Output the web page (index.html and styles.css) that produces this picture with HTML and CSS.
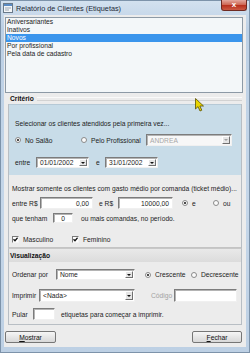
FILE: index.html
```html
<!DOCTYPE html>
<html lang="pt-BR">
<head>
    <meta charset="UTF-8">
    <meta name="viewport" content="width=device-width, initial-scale=1.0">
    <title>Relatório de Clientes (Etiquetas)</title>
    <link rel="stylesheet" href="styles.css">
</head>
<body>
    <div class="window">
        <div class="titlebar">
            <svg class="app-icon" width="10" height="10" viewBox="0 0 10 10">
                <rect x="0.5" y="0.5" width="9" height="9" fill="#f4f6f8" stroke="#6a7a8a"/>
                <rect x="1" y="1" width="8" height="2" fill="#5b8cc4"/>
                <rect x="2" y="4.5" width="6" height="1" fill="#9aa6b2"/>
                <rect x="2" y="6.5" width="4" height="1" fill="#9aa6b2"/>
            </svg>
            <span class="title">Relatório de Clientes (Etiquetas)</span>
            <div class="close">x</div>
        </div>

        <div class="client">
            <ul class="listbox">
                <li>Aniversariantes</li>
                <li>Inativos</li>
                <li class="selected">Novos</li>
                <li>Por profissional</li>
                <li>Pela data de cadastro</li>
            </ul>

            <div class="group">
                <div class="group-title"><span>Critério</span></div>
                <div class="group-body">
                    <div class="panel-blue">
                        <div class="row row-text">Selecionar os clientes atendidos pela primeira vez...</div>
                        <div class="row row-opts">
                            <span class="radio checked w-salao"><i></i>No Salão</span>
                            <span class="radio w-prof"><i></i>Pelo Profissional</span>
                            <div class="combo disabled w-andrea"><span class="value">ANDREA</span><span class="drop"></span></div>
                        </div>
                        <div class="row row-dates">
                            <span class="lbl w-entre">entre</span>
                            <div class="combo w-date"><span class="value">01/01/2002</span><span class="drop"></span></div>
                            <span class="lbl w-e">e</span>
                            <div class="combo w-date"><span class="value">31/01/2002</span><span class="drop"></span></div>
                        </div>
                    </div>

                    <div class="panel-gray">
                        <div class="row row-text">Mostrar somente os clientes com gasto médio por comanda (ticket médio)...</div>
                        <div class="row row-money">
                            <span class="lbl w-entre-rs">entre R$</span>
                            <div class="edit num w-min">0,00</div>
                            <span class="lbl w-ers">e R$</span>
                            <div class="edit num w-max">10000,00</div>
                            <span class="radio checked w-e-opt"><i></i>e</span>
                            <span class="radio"><i></i>ou</span>
                        </div>
                        <div class="row row-count">
                            <span class="lbl w-tenham">que tenham</span>
                            <div class="edit center w-count">0</div>
                            <span class="lbl after-count">ou mais comandas, no período.</span>
                        </div>
                        <div class="row row-checks">
                            <span class="check w-masc"><i><svg width="5" height="5" viewBox="0 0 5 5"><polyline points="0.5,2.3 2,3.8 4.6,0.8" fill="none" stroke="#111" stroke-width="1.3"/></svg></i>Masculino</span>
                            <span class="check"><i><svg width="5" height="5" viewBox="0 0 5 5"><polyline points="0.5,2.3 2,3.8 4.6,0.8" fill="none" stroke="#111" stroke-width="1.3"/></svg></i>Feminino</span>
                        </div>
                    </div>
                </div>
            </div>

            <div class="group">
                <div class="group-title view-title"><span>Visualização</span></div>
                <div class="group-body view-body">
                    <div class="row row-order">
                        <span class="lbl w-ordenar">Ordenar por</span>
                        <div class="combo w-nome"><span class="value">Nome</span><span class="drop"></span></div>
                        <span class="radio checked w-cresc"><i></i>Crescente</span>
                        <span class="radio"><i></i>Decrescente</span>
                    </div>
                    <div class="row row-print">
                        <span class="lbl w-imprimir">Imprimir</span>
                        <div class="combo w-nada"><span class="value">&lt;Nada&gt;</span><span class="drop"></span></div>
                        <span class="lbl muted w-codigo">Código</span>
                        <div class="edit w-codigo-box"></div>
                    </div>
                    <div class="row row-skip">
                        <span class="lbl w-pular">Pular</span>
                        <div class="edit w-skip"></div>
                        <span class="lbl after-skip">etiquetas para começar a imprimir.</span>
                    </div>
                </div>
            </div>

            <div class="buttons">
                <button class="btn btn-show"><u>M</u>ostrar</button>
                <button class="btn btn-close"><u>F</u>echar</button>
            </div>
        </div>

        <svg class="cursor" width="10" height="15" viewBox="0 0 10 15">
            <polygon points="0.5,0.5 0.5,11 3,8.6 5,13 6.8,12.2 4.9,8 8.5,8" fill="#e8d400" stroke="#5a5000" stroke-width="0.8"/>
        </svg>
    </div>
</body>
</html>
```

FILE: styles.css
```css
* {
    box-sizing: border-box;
}

body {
    margin: 0;
    font-family: "Liberation Sans", Arial, sans-serif;
    font-size: 6.7px;
    color: #1c1c1c;
}

.window {
    position: relative;
    width: 250px;
    height: 353px;
    border: 1px solid #7d93aa;
    background: linear-gradient(#d3e1ef, #bcd0e5 8%, #c4d6e9 60%, #bdd0e4);
    display: flex;
    flex-direction: column;
}

/* Barra de título */
.titlebar {
    height: 14px;
    display: flex;
    align-items: center;
    padding-left: 2px;
    position: relative;
}

.app-icon {
    margin-right: 3px;
}

.title {
    font-size: 7.3px;
    color: #1b2836;
}

.close {
    position: absolute;
    top: -1px;
    right: 2px;
    width: 26px;
    height: 11px;
    border: 1px solid #6e2a22;
    border-top: none;
    border-radius: 0 0 3px 3px;
    background: linear-gradient(#e3a89e, #cf6a58 45%, #b8321f 55%, #cc5a44);
    color: #fff;
    font-weight: bold;
    font-size: 8px;
    line-height: 9px;
    text-align: center;
}

/* Área cliente */
.client {
    flex: 1;
    margin: 0 3px 5px 3px;
    background: #ececec;
    display: flex;
    flex-direction: column;
}

.listbox {
    list-style: none;
    margin: 2px 3px 0 1px;
    padding: 0;
    height: 76px;
    border: 1px solid #8d9aa6;
    background: #f3f7f9;
}

.listbox li {
    height: 8px;
    line-height: 8px;
    padding-left: 1px;
}

.listbox li.selected {
    background: #3a95ec;
    color: #fff;
}

/* Grupos */
.group {
    margin: 0 4px;
}

.group-title {
    height: 11px;
    display: flex;
    align-items: center;
    padding-left: 2px;
    font-weight: bold;
    color: #111;
}

.group-title::after {
    content: "";
    flex: 1;
    margin-left: 3px;
    height: 2px;
    border-top: 1px solid #fafafa;
    border-bottom: 1px solid #d2d2d2;
}

.view-title {
    height: 14px;
    background: linear-gradient(#e9e9e9, #dcdcdc);
    border-top: 1px solid #c8c8c8;
    border-left: 1px solid #b8bec4;
    border-right: 1px solid #b8bec4;
    padding-left: 1px;
}

.view-title::after {
    display: none;
}

.group-body {
    border-left: 1px solid #b8bec4;
    border-right: 1px solid #b8bec4;
}

.panel-blue {
    height: 71px;
    background: #c8dce8;
    border-top: 1px solid #b6c9d6;
    padding: 13px 0 0 6px;
}

.panel-gray {
    height: 73px;
    padding: 8px 0 0 3px;
    border-bottom: 1px solid #c4c4c4;
}

.view-body {
    height: 63px;
    padding: 7px 0 0 3px;
    border-bottom: 1px solid #b8bec4;
}

.row {
    display: flex;
    align-items: center;
    white-space: nowrap;
}

.row-text {
    height: 10px;
}

.row-opts {
    height: 12px;
    margin-top: 6px;
}

.row-dates {
    height: 11px;
    margin-top: 11px;
}

.row-money {
    height: 12px;
    margin-top: 4px;
}

.row-count {
    height: 10px;
    margin-top: 4px;
}

.row-checks {
    height: 10px;
    margin-top: 11px;
}

.row-order {
    height: 11px;
}

.row-print {
    height: 13px;
    margin-top: 9px;
}

.row-skip {
    height: 12px;
    margin-top: 6px;
}

.lbl {
    display: inline-block;
}

.muted {
    color: #a2a2a2;
}

/* Larguras dos rótulos e campos */
.w-salao { width: 66px; }
.w-prof { width: 65px; }
.w-andrea { width: 86px; }
.w-entre { width: 21px; }
.w-date { width: 53px; }
.w-e { width: 16px; padding-left: 7px; }
.w-entre-rs { width: 28px; }
.w-min { width: 53px; }
.w-ers { width: 25px; padding-left: 6px; }
.w-max { width: 55px; }
.w-e-opt { width: 31px; margin-left: 9px; }
.w-tenham { width: 41px; }
.w-count { width: 20px; }
.after-count { margin-left: 8px; }
.w-masc { width: 60px; }
.w-ordenar { width: 44px; }
.w-nome { width: 79px; }
.w-cresc { width: 46px; margin-left: 10px; }
.w-imprimir { width: 27px; }
.w-nada { width: 96px; height: 11px; }
.w-codigo { width: 23px; margin-left: 16px; }
.w-codigo-box { width: 63px; }
.w-pular { width: 21px; }
.w-skip { width: 22px; }
.after-skip { margin-left: 6px; }

/* Controles */
.radio, .check {
    display: inline-flex;
    align-items: center;
}

.radio i {
    display: inline-block;
    width: 6px;
    height: 6px;
    margin-right: 4px;
    border-radius: 50%;
    border: 1px solid #8a8a8a;
    background: #fbfbfb;
    position: relative;
}

.radio.checked i::after {
    content: "";
    position: absolute;
    left: 1px;
    top: 1px;
    width: 2px;
    height: 2px;
    border-radius: 50%;
    background: #111;
}

.check i {
    display: inline-flex;
    align-items: center;
    justify-content: center;
    width: 7px;
    height: 7px;
    margin-right: 4px;
    border: 1px solid;
    border-color: #7a7a7a #f4f4f4 #f4f4f4 #7a7a7a;
    background: #fff;
}

.combo {
    height: 100%;
    display: flex;
    align-items: center;
    background: #fff;
    border: 1px solid;
    border-color: #7c7c7c #f0f0f0 #f0f0f0 #7c7c7c;
    box-shadow: inset 1px 1px 0 #b4b4b4;
    padding: 1px 1px 1px 3px;
}

.combo .value {
    flex: 1;
}

.combo.disabled {
    background: #f7f7f7;
    color: #a8a8a8;
}

.drop {
    width: 8px;
    height: 100%;
    background: #e6e6e6;
    border: 1px solid;
    border-color: #fff #707070 #707070 #fff;
    display: flex;
    align-items: center;
    justify-content: center;
}

.drop::before {
    content: "";
    border-left: 2px solid transparent;
    border-right: 2px solid transparent;
    border-top: 2px solid #111;
}

.combo.disabled .drop::before {
    border-top-color: #a0a0a0;
}

.edit {
    height: 100%;
    background: #fff;
    border: 1px solid;
    border-color: #7c7c7c #f0f0f0 #f0f0f0 #7c7c7c;
    box-shadow: inset 1px 1px 0 #b4b4b4;
    display: flex;
    align-items: center;
    padding: 0 3px;
}

.edit.num {
    justify-content: flex-end;
}

.edit.center {
    justify-content: center;
}

/* Botões */
.buttons {
    display: flex;
    justify-content: space-between;
    padding: 6px 4px 0 1px;
}

.btn {
    height: 12px;
    padding: 0;
    font-family: inherit;
    font-size: 6.7px;
    color: #111;
    border: 1px solid #767676;
    border-radius: 2px;
    background: linear-gradient(#f6f6f6, #e6e6e6 50%, #d8d8d8);
}

.btn-show {
    width: 51px;
}

.btn-close {
    width: 50px;
}

.cursor {
    position: absolute;
    left: 194px;
    top: 97px;
}
```
